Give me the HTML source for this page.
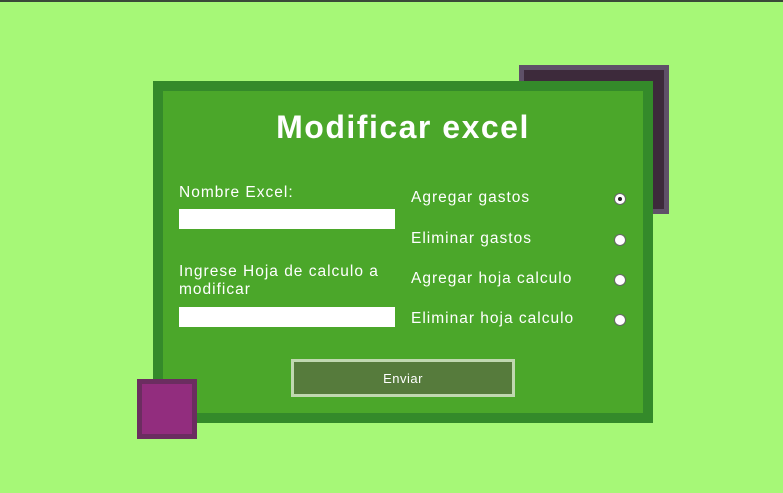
<!DOCTYPE html>
<html><head><style>
body{margin:0;width:783px;height:493px;background:#a6f877;position:relative;overflow:hidden;font-family:"Liberation Sans",sans-serif;color:#fff}
.top{position:absolute;left:0;top:0;width:783px;height:2px;background:#3a4a38}
.dark{position:absolute;left:519px;top:65px;width:140px;height:139px;border:5px solid #5f5068;background:#3d2a3b}
.panel{position:absolute;left:153px;top:81px;width:480px;height:322px;border:10px solid #348a2a;background:#4ba72a}
.pink{position:absolute;left:137px;top:379px;width:50px;height:50px;border:5px solid #6b2d60;background:#922d7e}
.t{position:absolute;white-space:nowrap;font-size:15.5px;letter-spacing:1px}
h1{position:absolute;margin:0;left:153px;width:500px;top:109px;text-align:center;font-size:32px;font-weight:bold;letter-spacing:1.5px}
.in{position:absolute;left:179px;width:216px;height:20px;background:#fff}
.r{position:absolute;left:614px;width:10px;height:10px;border:1px solid #666;border-radius:50%;background:#fff}
.btn{position:absolute;left:291px;top:359px;width:218px;height:32px;border:3px solid #c0d8b0;background:#567b3c;text-align:center;line-height:34px;font-size:13px;letter-spacing:.5px}
</style></head><body>
<div class="top"></div>
<div class="dark"></div>
<div class="panel"></div>
<div class="pink"></div>
<h1>Modificar excel</h1>
<div class="t" style="left:179px;top:184px">Nombre Excel:</div>
<div class="in" style="top:209px"></div>
<div class="t" style="left:179px;top:263px;line-height:18px">Ingrese Hoja de calculo a<br>modificar</div>
<div class="in" style="top:307px"></div>
<div class="t" style="left:411px;top:189px">Agregar gastos</div>
<div class="t" style="left:411px;top:230px">Eliminar gastos</div>
<div class="t" style="left:411px;top:270px">Agregar hoja calculo</div>
<div class="t" style="left:411px;top:310px">Eliminar hoja calculo</div>
<div class="r" style="top:193px"><div style="width:4px;height:4px;background:#222;border-radius:50%;margin:3px"></div></div>
<div class="r" style="top:234px"></div>
<div class="r" style="top:274px"></div>
<div class="r" style="top:314px"></div>
<div class="btn">Enviar</div>
</body></html>
